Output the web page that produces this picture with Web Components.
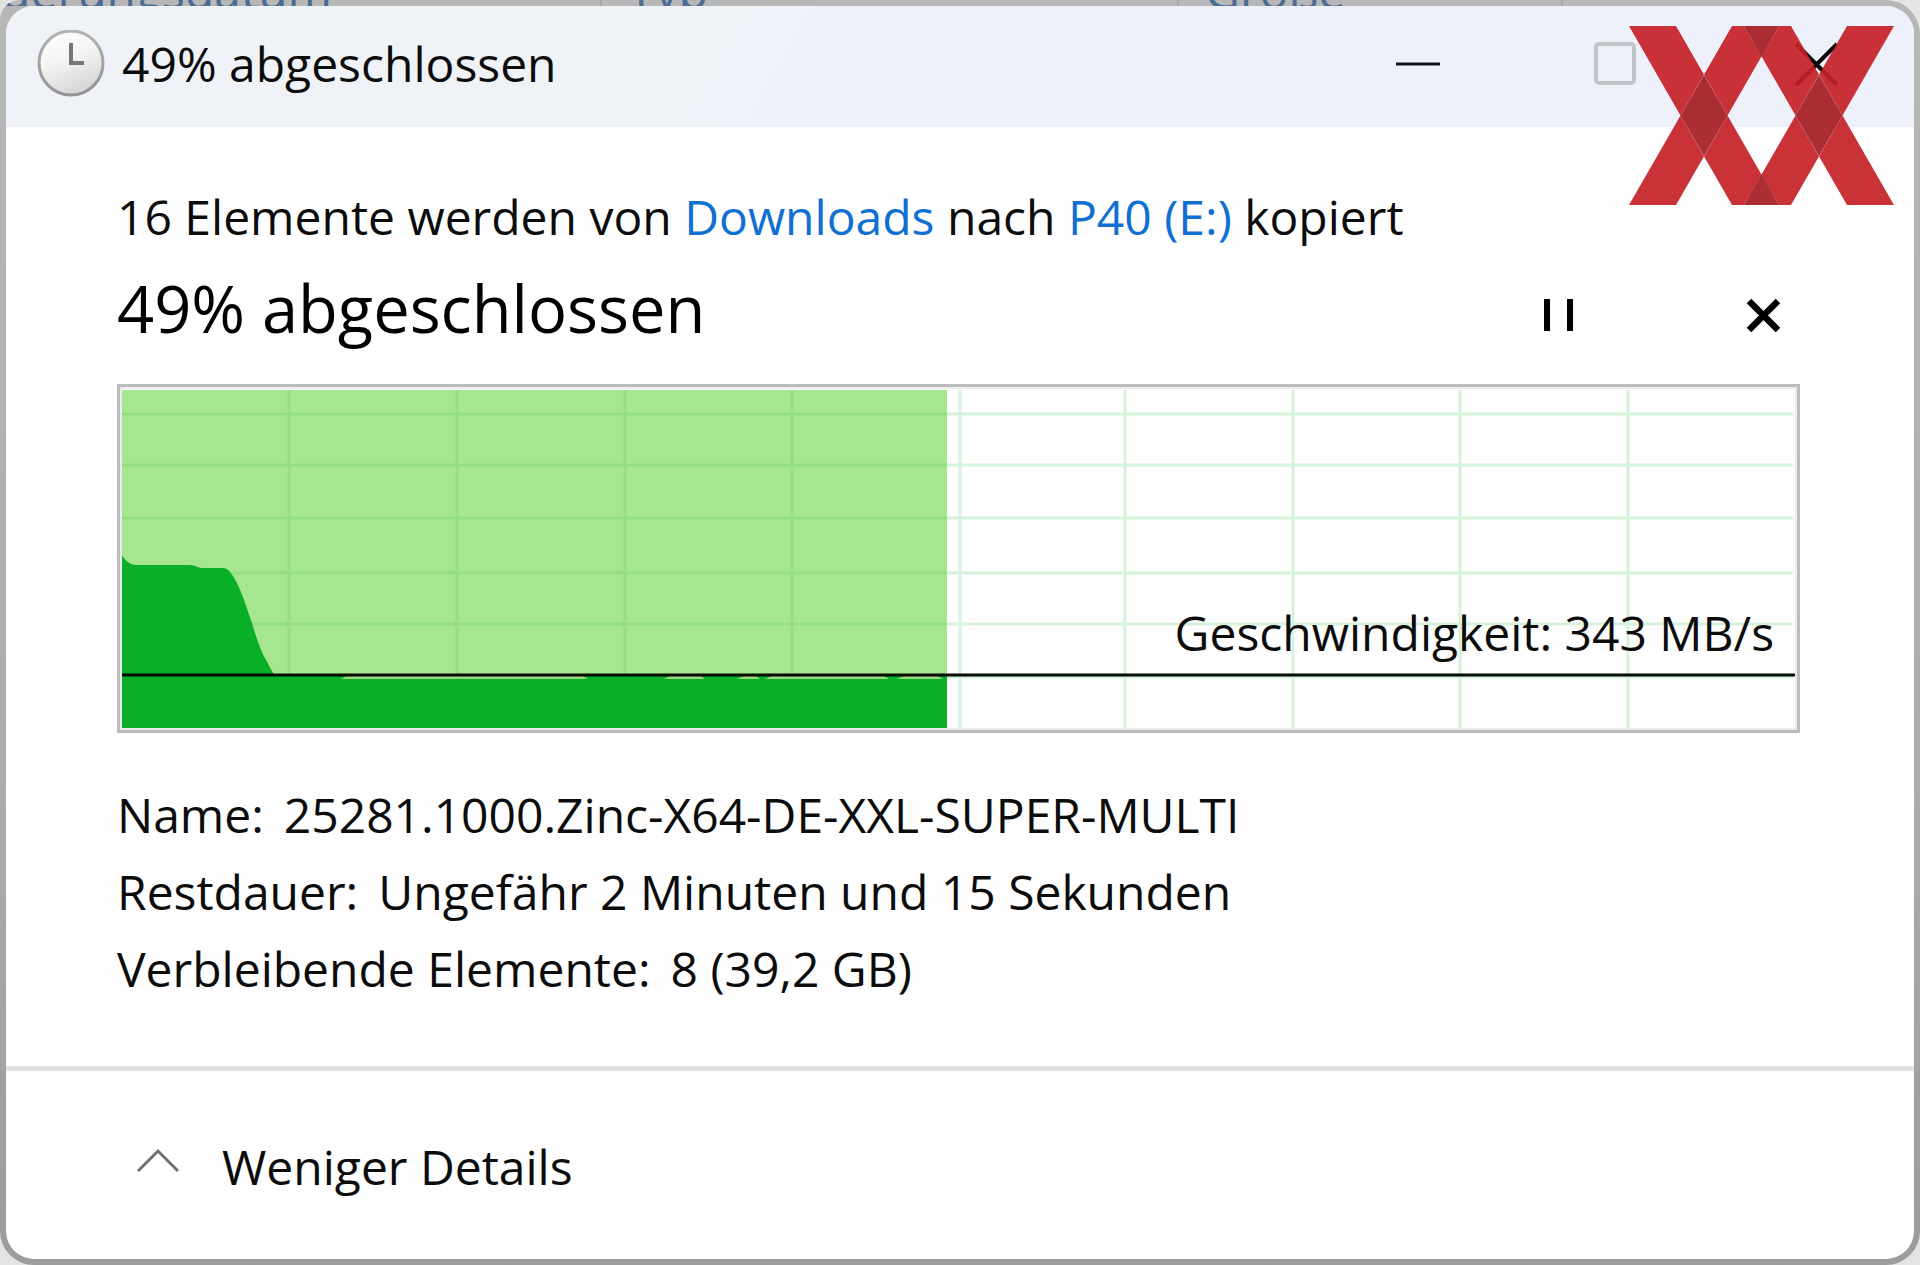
<!DOCTYPE html>
<html lang="de">
<head>
<meta charset="utf-8">
<title>49% abgeschlossen</title>
<style>
  html, body { margin: 0; }
  body { background: #e4e4e4; color: #0c0c0c; font: 48px/77px "Open Sans", "Noto Sans", sans-serif; }
</style>
</head>
<body>
<copy-dialog></copy-dialog>

<script>
const define = (name, html) => {
  const template = document.createElement('template');
  template.innerHTML = html;
  customElements.define(name, class extends HTMLElement {
    constructor() {
      super();
      this.attachShadow({ mode: 'open' }).append(template.content.cloneNode(true));
    }
  });
};

/* Column header of the Explorer window that lies behind the dialog */
define('backdrop-header', `
<style>
  :host { display: grid; grid-template-columns: 602fr 577fr 384fr 357fr; height: 6px; overflow: hidden; color: #4a6c94; }
  span { display: flex; align-items: flex-end; box-sizing: border-box; height: 6px; min-width: 0; padding-left: 26px; line-height: 30px; border-right: 2px solid #a6a6a6; white-space: nowrap; }
  span:first-of-type { justify-content: flex-end; padding: 0 268px 0 0; }
  span:last-of-type { border: 0; }
</style>
<span aria-hidden="true">Änderungsdatum</span><span aria-hidden="true">Typ</span><span aria-hidden="true">Größe</span><span></span>`);

define('clock-icon', `
<style>:host { display: block; width: 68px; height: 68px; } svg { display: block; }</style>
<svg width="68" height="68" viewBox="0 0 68 68" aria-hidden="true">
  <defs><linearGradient id="face" x1="0" y1="0" x2=".4" y2="1"><stop offset="0" stop-color="#fff"/><stop offset=".5" stop-color="#f5f5f5"/><stop offset="1" stop-color="#d8d8d8"/></linearGradient>
  <linearGradient id="rim" x1="0" y1="0" x2="0" y2="1"><stop offset="0" stop-color="#b2b2b2"/><stop offset="1" stop-color="#949494"/></linearGradient></defs>
  <circle cx="34" cy="33" r="32" fill="url(#face)" stroke="url(#rim)" stroke-width="3"/>
  <path d="M34 13V33H47" fill="none" stroke="#777" stroke-width="4"/>
</svg>`);

define('brand-mark', `
<style>:host { display: block; width: 265px; height: 179px; pointer-events: none; } svg { display: block; }</style>
<svg width="265" height="179" viewBox="0 0 265 179" aria-hidden="true">
  <g opacity=".92">
    <path fill="#c52127" d="M0 0H47L150 179H103ZM0 179H47L150 0H103ZM115 0H162L265 179H218ZM115 179H162L265 0H218Z"/>
    <path fill="#a41d22" d="M75 49L98.500 89.500L75 130L51.500 89.500ZM190 49L213.500 89.500L190 130L166.500 89.500ZM115 0H150L132.500 31ZM115 179H150L132.500 148Z"/>
  </g>
</svg>`);

define('title-bar', `
<style>
  :host { display: flex; align-items: center; box-sizing: border-box; height: 121px; padding: 0 2px 6px 31px; gap: 17px; background: linear-gradient(120deg, #eff3f8, #eff3f7 36%, #eef1fa 42%); position: relative; }
  h1 { flex: 1; margin: 0; font: inherit; }
  nav { display: flex; gap: 10px; }
  button { width: 190px; height: 112px; padding: 0; border: 0; background: none; display: grid; place-items: center; }
  svg { display: block; }
  brand-mark { position: absolute; top: 20px; right: 20px; }
</style>
<clock-icon></clock-icon>
<h1><slot></slot></h1>
<nav>
  <button aria-label="Minimieren"><svg width="46" height="46" viewBox="0 0 46 46"><path d="M2 23H46" stroke="#111" stroke-width="3"/></svg></button>
  <button aria-label="Maximieren" disabled><svg width="46" height="46" viewBox="0 0 46 46"><rect x="2" y="3" width="38" height="39" rx="3" fill="none" stroke="#c2c4c8" stroke-width="4"/></svg></button>
  <button aria-label="Schließen"><svg width="46" height="46" viewBox="0 0 46 46"><path d="M2 3L43 44M43 3L2 44" stroke="#0c0c0c" stroke-width="4"/></svg></button>
</nav>
<brand-mark></brand-mark>`);

define('progress-heading', `
<style>
  :host { display: flex; align-items: flex-end; gap: 130px; margin: 9px 0 32px; }
  h2 { flex: 1; margin: 0; font: 65px/88px "Open Sans", "Noto Sans", sans-serif; color: #000; }
  button { width: 74px; height: 74px; padding: 0; border: 0; background: none; display: grid; place-items: center; }
</style>
<h2><slot></slot></h2>
<button aria-label="Anhalten"><svg width="34" height="34" viewBox="0 0 34 34"><path d="M5 4V30M28 4V30" stroke="#000" stroke-width="6" stroke-linecap="square"/></svg></button>
<button aria-label="Abbrechen"><svg width="34" height="34" viewBox="0 0 34 34"><path d="M3 3L32 32M32 3L3 32" stroke="#000" stroke-width="6.500"/></svg></button>`);

/* Transfer speed over the share of data already copied */
define('speed-chart', `
<style>
  :host { display: block; position: relative; }
  svg { display: block; width: 100%; height: auto; }
  p { position: absolute; right: 26px; bottom: 62px; margin: 0; }
</style>
<svg viewBox="0 0 1683 349" aria-hidden="true">
  <rect x="1" y="1" width="1681" height="347" fill="#fefefe"/>
  <rect x="3.500" y="3.500" width="1676" height="342" fill="none" stroke="#ececec" stroke-width="3"/>
  <rect x="1.500" y="1.500" width="1680" height="346" fill="none" stroke="#bcbcbc" stroke-width="3"/>
  <path d="M843 6V344M1008 6V344M1176 6V344M1343 6V344M1511 6V344M830 30H1676M830 81H1676M830 134H1676M830 189H1676M830 240H1676M830 293H1676" stroke="#d5f3da" stroke-width="3" fill="none"/>
  <rect x="5" y="6" width="825" height="338" fill="#a6e691"/>
  <path d="M172 6V344M340 6V344M508 6V344M675 6V344M5 30H830M5 81H830M5 134H830M5 189H830M5 240H830" stroke="#93df80" stroke-width="3" fill="none"/>
  <path fill="#09af27" d="M5 171C8 177 14 181 19 181H73C79 181 80 184 85 184H106C111 184 113 188 116 192C124 204 130 225 135 239C140 256 144 267 149 276L156 289Q158 292 163 292H830V344H5Z"/>
  <path fill="#9cd77f" d="M224 295L230 292H466L471 295ZM547 295L553 292H584L588 295ZM620 295L627 292H639L643 295ZM648 295L655 292H767L772 295ZM780 295L787 292H821L826 295Z"/>
  <path d="M5 291H1678" stroke="#080c08" stroke-width="3"/>
</svg>
<p><slot></slot></p>`);

define('transfer-details', `
<style>
  :host { display: block; margin-top: 43px; }
  dl { margin: 0; }
  div { display: flex; gap: 20px; }
  dt, dd { margin: 0; }
</style>
<dl>
  <div><dt>Name:</dt><dd>25281.1000.Zinc-X64-DE-XXL-SUPER-MULTI</dd></div>
  <div><dt>Restdauer:</dt><dd>Ungefähr 2 Minuten und 15 Sekunden</dd></div>
  <div><dt>Verbleibende Elemente:</dt><dd>8 (39,2 GB)</dd></div>
</dl>`);

define('details-toggle', `
<style>
  :host { display: flex; align-items: center; box-sizing: border-box; height: 193px; padding: 2px 0 0 131px; border-top: 5px solid #e1e1e1; }
  button { display: flex; align-items: center; gap: 43px; padding: 0; border: 0; background: none; font: inherit; color: inherit; }
  svg { display: block; }
</style>
<button aria-expanded="true"><svg width="42" height="36" viewBox="0 0 42 36" aria-hidden="true"><path d="M1 23L21 3L41 23" fill="none" stroke="#707070" stroke-width="3"/></svg><slot></slot></button>`);

define('copy-dialog', `
<style>
  :host { display: block; box-sizing: border-box; padding: 0 6px 6px; border-radius: 20px 34px 34px 34px; overflow: hidden; background: linear-gradient(#b7b7b7, #adadad 60%, #9c9c9c); }
  backdrop-header { margin: 0 -6px; }
  section { border-radius: 28px; overflow: hidden; background: #fefefe; }
  main { padding: 52px 114px 59px 111px; }
  p { margin: 0; line-height: 76px; }
  a { color: #0f70d2; text-decoration: none; }
</style>
<backdrop-header></backdrop-header>
<section>
  <title-bar>49% abgeschlossen</title-bar>
  <main>
    <p>16 Elemente werden von <a href="#downloads">Downloads</a> nach <a href="#p40">P40 (E:)</a> kopiert</p>
    <progress-heading>49% abgeschlossen</progress-heading>
    <speed-chart>Geschwindigkeit: 343 MB/s</speed-chart>
    <transfer-details></transfer-details>
  </main>
  <details-toggle>Weniger Details</details-toggle>
</section>`);
</script>
</body>
</html>
